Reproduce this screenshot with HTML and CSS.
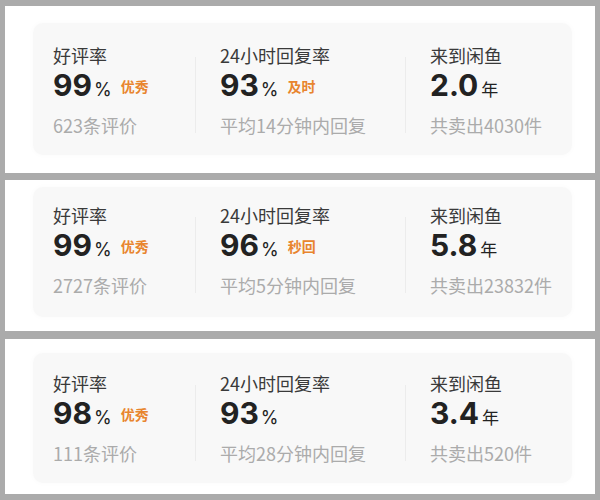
FILE: index.html
```html
<!DOCTYPE html>
<html lang="zh-CN">
<head>
<meta charset="utf-8">
<link rel="stylesheet" href="styles.css">
</head>
<body>
<div class="page">
  <section class="panel panel-1">
    <div class="card">
      <div class="col col-a">
        <div class="label">好评率</div>
        <div class="value"><span class="num">99</span><span class="unit">%</span><span class="badge">优秀</span></div>
        <div class="sub">623条评价</div>
      </div>
      <div class="divider"></div>
      <div class="col col-b">
        <div class="label">24小时回复率</div>
        <div class="value"><span class="num">93</span><span class="unit">%</span><span class="badge">及时</span></div>
        <div class="sub">平均14分钟内回复</div>
      </div>
      <div class="divider"></div>
      <div class="col col-c">
        <div class="label">来到闲鱼</div>
        <div class="value"><span class="num">2.0</span><span class="unit unit-cjk">年</span></div>
        <div class="sub">共卖出4030件</div>
      </div>
    </div>
  </section>
  <section class="panel panel-2">
    <div class="card">
      <div class="col col-a">
        <div class="label">好评率</div>
        <div class="value"><span class="num">99</span><span class="unit">%</span><span class="badge">优秀</span></div>
        <div class="sub">2727条评价</div>
      </div>
      <div class="divider"></div>
      <div class="col col-b">
        <div class="label">24小时回复率</div>
        <div class="value"><span class="num">96</span><span class="unit">%</span><span class="badge">秒回</span></div>
        <div class="sub">平均5分钟内回复</div>
      </div>
      <div class="divider"></div>
      <div class="col col-c">
        <div class="label">来到闲鱼</div>
        <div class="value"><span class="num">5.8</span><span class="unit unit-cjk">年</span></div>
        <div class="sub">共卖出23832件</div>
      </div>
    </div>
  </section>
  <section class="panel panel-3">
    <div class="card">
      <div class="col col-a">
        <div class="label">好评率</div>
        <div class="value"><span class="num">98</span><span class="unit">%</span><span class="badge">优秀</span></div>
        <div class="sub">111条评价</div>
      </div>
      <div class="divider"></div>
      <div class="col col-b">
        <div class="label">24小时回复率</div>
        <div class="value"><span class="num">93</span><span class="unit">%</span></div>
        <div class="sub">平均28分钟内回复</div>
      </div>
      <div class="divider"></div>
      <div class="col col-c">
        <div class="label">来到闲鱼</div>
        <div class="value"><span class="num">3.4</span><span class="unit unit-cjk">年</span></div>
        <div class="sub">共卖出520件</div>
      </div>
    </div>
  </section>
</div>
</body>
</html>
```

FILE: styles.css
```css
html, body {
  margin: 0;
  padding: 0;
}
body {
  width: 600px;
  height: 500px;
  background: #ababab;
  font-family: "Noto Sans CJK SC", "Noto Sans", sans-serif;
  overflow: hidden;
}
.page {
  display: flex;
  flex-direction: column;
  padding: 6px 5px 0 5px;
}
.panel {
  background: #ffffff;
  box-sizing: border-box;
  padding-left: 28px;
  padding-right: 23px;
}
.panel-1 { height: 167px; padding-top: 17px; }
.panel-2 { height: 151px; padding-top: 7px; margin-top: 7px; }
.panel-3 { height: 155px; padding-top: 14px; margin-top: 8px; }

.card {
  display: flex;
  background: #f8f8f8;
  border-radius: 10px;
  box-shadow: 0 0 6px rgba(0, 0, 0, 0.025);
  padding-left: 20px;
  box-sizing: border-box;
  height: 130px;
}
.panel-1 .card { height: 132px; padding-top: 20px; }
.panel-2 .card { padding-top: 16px; }
.panel-3 .card { padding-top: 18px; }

.col {
  display: flex;
  flex-direction: column;
}
.col-a { width: 142px; }
.col-b { width: 185px; padding-left: 24px; }
.col-c { padding-left: 24px; }

.divider {
  width: 1px;
  height: 76px;
  background: #ececec;
  margin-top: 14px;
}

.label {
  font-size: 18px;
  line-height: 24px;
  color: #3a3a3a;
  white-space: nowrap;
}
.value {
  display: flex;
  align-items: baseline;
  height: 36px;
  line-height: 36px;
  white-space: nowrap;
}
.num {
  font-family: "Inter", "Noto Sans", sans-serif;
  font-weight: 700;
  font-size: 30px;
  color: #222222;
}
.unit {
  font-family: "Inter", "Noto Sans", sans-serif;
  font-size: 18px;
  color: #222222;
  margin-left: 2px;
}
.unit-cjk {
  font-family: "Noto Sans CJK SC", sans-serif;
  font-size: 17px;
  margin-left: 3px;
}
.badge {
  font-size: 14px;
  font-weight: 700;
  color: #e8852e;
  margin-left: 9px;
  position: relative;
  top: -4px;
}
.sub {
  margin-top: 10px;
  font-size: 18px;
  line-height: 24px;
  color: #ababab;
  white-space: nowrap;
}
```
